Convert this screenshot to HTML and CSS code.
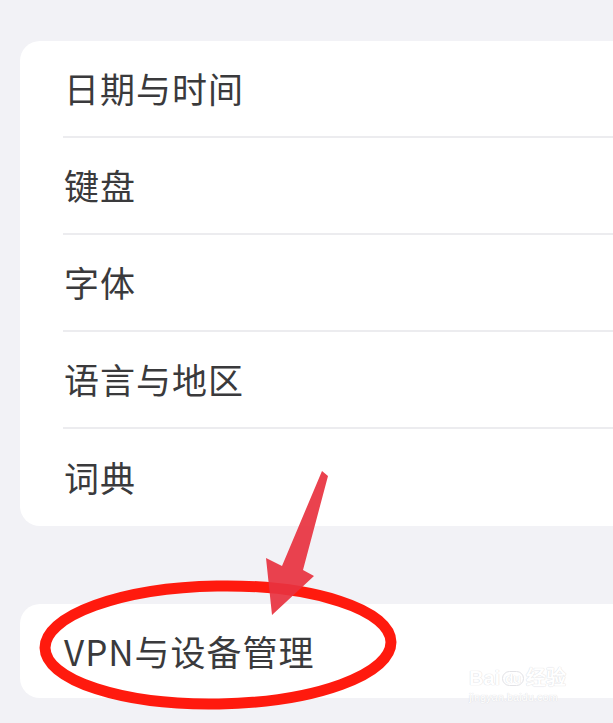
FILE: index.html
```html
<!DOCTYPE html>
<html lang="zh-CN">
<head>
<meta charset="utf-8">
<link rel="stylesheet" href="styles.css">
</head>
<body>
<main class="page">
  <section class="group group-first">
    <div class="row"><span class="label">日期与时间</span></div>
    <div class="row"><span class="label">键盘</span></div>
    <div class="row"><span class="label">字体</span></div>
    <div class="row"><span class="label">语言与地区</span></div>
    <div class="row"><span class="label">词典</span></div>
  </section>
  <section class="group group-second">
    <div class="row"><span class="label">VPN与设备管理</span></div>
  </section>
</main>
<div class="watermark">
  <div class="wm-top"><span>Bai</span><span class="wm-paw">du</span><span>经验</span></div>
  <div class="wm-bottom">jingyan.baidu.com</div>
</div>
<svg class="annotation" width="613" height="723" viewBox="0 0 613 723">
  <ellipse cx="218" cy="645" rx="173" ry="59" fill="none" stroke="#ff1a0e" stroke-width="11" transform="rotate(-1 218 645)"/>
  <path d="M322 471 L328 476 L303 570 L314 576 L272 615 L266 558 L282 566 Z" fill="#e8323f" opacity="0.92"/>
</svg>
</body>
</html>
```
FILE: styles.css
```css
html, body {
  margin: 0;
  padding: 0;
}
body {
  width: 613px;
  height: 723px;
  overflow: hidden;
  background: #f2f2f6;
  font-family: "Noto Sans CJK SC", "Noto Sans", sans-serif;
  position: relative;
}
.page {
  display: flex;
  flex-direction: column;
  padding: 41px 0 0 20px;
  gap: 78px;
}
.group {
  background: #ffffff;
  border-radius: 20px 0 0 20px;
  display: flex;
  flex-direction: column;
}
.row {
  height: 97px;
  display: flex;
  align-items: center;
  margin-left: 43px;
  border-bottom: 2px solid #ececef;
  box-sizing: border-box;
}
.row:last-child {
  border-bottom: none;
}
.group-second .row {
  height: 94px;
}
.label {
  margin-left: 1px;
  font-size: 35px;
  color: #3a3a3c;
  letter-spacing: 1px;
  line-height: 1;
  position: relative;
  top: -1px;
}
.annotation {
  position: absolute;
  left: 0;
  top: 0;
  pointer-events: none;
}
.watermark {
  position: absolute;
  left: 469px;
  top: 668px;
  color: #ffffff;
  font-family: "Liberation Sans", sans-serif;
  text-shadow: 0 0 1px #dcdce0, 0 0 1px #dcdce0;
}
.wm-top {
  display: flex;
  align-items: center;
  gap: 2px;
  font-size: 20px;
  font-weight: bold;
  line-height: 1;
}
.wm-paw {
  font-size: 13px;
  border: 1px solid #e2e2e6;
  border-radius: 8px;
  padding: 0 2px;
}
.wm-bottom {
  font-size: 11px;
  line-height: 1.4;
  margin-top: 2px;
}
```
